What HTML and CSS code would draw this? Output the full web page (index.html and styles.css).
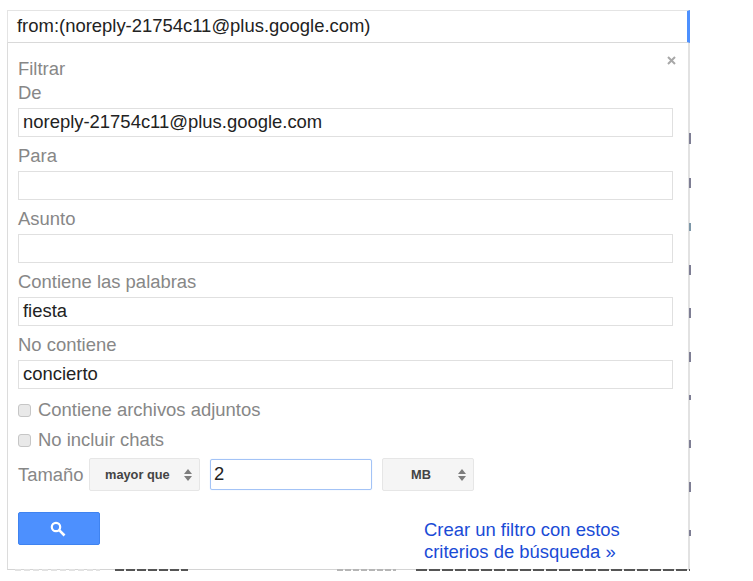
FILE: index.html
```html
<!DOCTYPE html>
<html lang="es">
<head>
<meta charset="utf-8">
<title>Filtrar</title>
<link rel="stylesheet" href="styles.css">
</head>
<body>
<div class="widget">
  <div class="searchbar">from:(noreply-21754c11@plus.google.com)</div>
  <div class="panel">
    <svg class="close" width="9" height="9" viewBox="0 0 9 9"><path d="M1 1l7 7M8 1L1 8" stroke="#a8a8a8" stroke-width="2"/></svg>
    <div class="title">Filtrar</div>
    <div class="label first">De</div>
    <div class="field">noreply-21754c11@plus.google.com</div>
    <div class="label">Para</div>
    <div class="field"></div>
    <div class="label">Asunto</div>
    <div class="field"></div>
    <div class="label">Contiene las palabras</div>
    <div class="field">fiesta</div>
    <div class="label">No contiene</div>
    <div class="field">concierto</div>
    <div class="check check-first"><span class="box"></span>Contiene archivos adjuntos</div>
    <div class="check"><span class="box"></span>No incluir chats</div>
    <div class="size">
      <span class="size-label">Tamaño</span>
      <div class="select select-cmp"><span class="select-text">mayor que</span>
        <svg class="updown" width="8" height="14" viewBox="0 0 8 14"><path d="M4 1l4 5H0zM4 13L0 8h8z" fill="#7d7d7d"/></svg></div>
      <div class="size-input">2</div>
      <div class="select select-unit"><span class="select-text">MB</span>
        <svg class="updown" width="8" height="14" viewBox="0 0 8 14"><path d="M4 1l4 5H0zM4 13L0 8h8z" fill="#7d7d7d"/></svg></div>
    </div>
    <div class="actions">
      <div class="search-btn">
        <svg class="search-icon" width="16" height="16" viewBox="0 0 16 16"><circle cx="6" cy="6" r="4.2" fill="none" stroke="#fff" stroke-width="2.2"/><path d="M9.2 9.2l5.3 5.3" stroke="#fff" stroke-width="2.6"/></svg>
      </div>
      <a class="create" href="#">Crear un filtro con estos<br>criterios de búsqueda »</a>
    </div>
    <span class="mark m1"></span><span class="mark m2"></span><span class="mark m3"></span><span class="mark m4"></span><span class="mark m5"></span><span class="mark m6"></span><span class="mark m7"></span><span class="mark m8"></span><span class="mark m9"></span><span class="mark m10"></span>
  </div>
  <div class="peek">
    <span class="peek-a"></span><span class="peek-b"></span><span class="peek-c"></span><span class="peek-d"></span>
  </div>
</div>
</body>
</html>
```
FILE: styles.css
```css
html, body { margin: 0; background: #fff; }
body { font-family: "Liberation Sans", Arial, sans-serif; height: 581px; overflow: hidden; }
.widget { width: 683px; margin: 10px 0 0 7px; }
.searchbar {
  box-sizing: border-box; height: 33px; padding: 0 0 0 9px;
  border-top: 1px solid #e4e4e4; border-left: 1px solid #e4e4e4; border-bottom: 1px solid #d9d9d9;
  border-right: 3px solid #4d90fe;
  font-size: 18.45px; line-height: 30px; color: #222;
}
.panel {
  position: relative; box-sizing: border-box; width: 683px; height: 527px;
  padding: 16px 16px 0 10px;
  border-left: 1px solid #dcdcdc; border-right: 2px solid #e2e2e2; border-bottom: 1px solid #d4d4d4;
}
.close { position: absolute; top: 13px; right: 12px; }
.title, .label { font-size: 18.45px; color: #878787; line-height: 20px; height: 20px; }
.label.first { margin-top: 4px; margin-bottom: 5px; }
.label { margin-top: 9px; margin-bottom: 5px; }
.field {
  box-sizing: border-box; height: 29px; border: 1px solid #e0e0e0; width: 655px;
  font-size: 18.45px; line-height: 26px; padding-left: 4px; color: #222;
}
.check { display: flex; align-items: center; height: 20px; margin-top: 10px; font-size: 18.45px; color: #878787; }
.check-first { margin-top: 11px; }
.box {
  box-sizing: border-box; width: 13px; height: 13px; margin-right: 7px;
  border: 1px solid #c6c6c6; border-radius: 3px; background: #e9e9e9;
}
.size { display: flex; align-items: center; height: 33px; margin-top: 8px; }
.size-label { font-size: 18.45px; color: #878787; width: 71px; }
.select {
  box-sizing: border-box; height: 33px; display: flex; align-items: center; justify-content: space-between;
  border: 1px solid #e6e6e6; border-radius: 2px; background: #f5f5f5; padding-right: 7px;
  font-size: 12.8px; font-weight: bold; color: #444;
}
.select-cmp { width: 111px; padding-left: 15px; }
.select-unit { width: 92px; padding-left: 28px; }
.size-input {
  box-sizing: border-box; width: 162px; height: 31px; margin: 0 10px;
  border: 1px solid #a3c3f6; border-radius: 2px; font-size: 18.45px; line-height: 28px; padding-left: 3px; color: #222;
  box-shadow: 0 0 1px #b9d2fa;
}
.actions { display: flex; justify-content: space-between; margin-top: 21px; }
.search-btn {
  width: 82px; height: 33px; background: #4d90fe; border: 1px solid #3f83f0; box-sizing: border-box;
  border-radius: 2px; display: flex; align-items: center; justify-content: center;
}
.search-icon { margin-left: -2px; }
.create { display: block; width: 248px; margin-top: 7px; font-size: 18.45px; line-height: 22px; color: #1a4bd6; text-decoration: none; }
.mark { position: absolute; right: -3px; width: 2px; background: #7e7e94; }
.m1 { top: 90px; height: 11px; } .m2 { top: 135px; height: 10px; } .m3 { top: 180px; height: 8px; background: #7d97a8; }
.m4 { top: 222px; height: 10px; } .m5 { top: 265px; height: 10px; } .m6 { top: 309px; height: 10px; }
.m7 { top: 352px; height: 5px; } .m8 { top: 397px; height: 8px; } .m9 { top: 439px; height: 10px; } .m10 { top: 487px; height: 6px; }
.peek { display: flex; height: 2px; margin-top: -1px; position: relative; }
.peek-a { width: 85px; margin-left: 8px; background: repeating-linear-gradient(90deg, #e2e2e2 0 6px, transparent 6px 9px); }
.peek-b { width: 73px; margin-left: 15px; background: repeating-linear-gradient(90deg, #555 0 9px, transparent 9px 11px); }
.peek-c { width: 59px; margin-left: 149px; background: repeating-linear-gradient(90deg, #b5b5b5 0 6px, transparent 6px 8px); }
.peek-d { width: 275px; margin-left: 20px; background: repeating-linear-gradient(90deg, #555 0 11px, transparent 11px 13px); }
```
